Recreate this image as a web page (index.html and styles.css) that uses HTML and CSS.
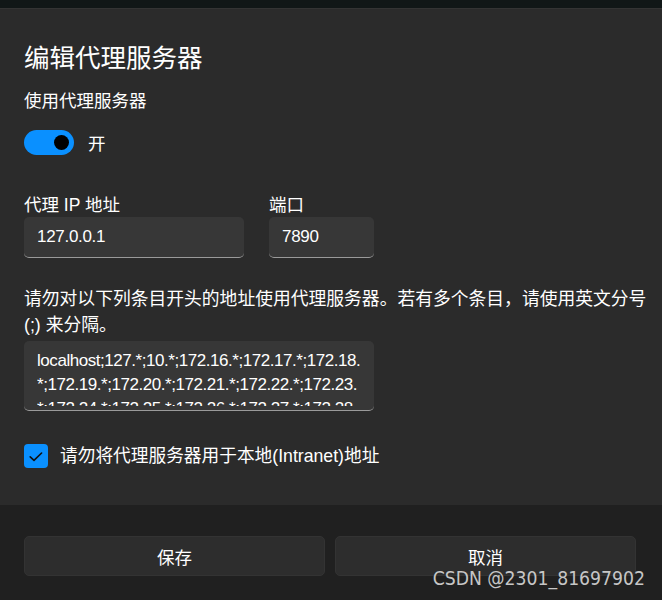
FILE: index.html
```html
<!DOCTYPE html>
<html lang="zh-CN">
<head>
<meta charset="utf-8">
<title>编辑代理服务器</title>
<link rel="stylesheet" href="styles.css">
</head>
<body>
<div class="dialog">
  <div class="content">
    <h1 class="title">编辑代理服务器</h1>
    <div class="subtitle">使用代理服务器</div>
    <div class="toggle-row">
      <div class="toggle"><span class="knob"></span></div>
      <span class="toggle-label">开</span>
    </div>
    <div class="fields">
      <div class="field field-ip">
        <div class="label">代理 IP 地址</div>
        <div class="input">127.0.0.1</div>
      </div>
      <div class="field field-port">
        <div class="label">端口</div>
        <div class="input">7890</div>
      </div>
    </div>
    <p class="desc">请勿对以下列条目开头的地址使用代理服务器。若有多个条目，请使用英文分号<br>(;) 来分隔。</p>
    <div class="textarea">
      <div class="textarea-view">localhost;127.*;10.*;172.16.*;172.17.*;172.18.<br>*;172.19.*;172.20.*;172.21.*;172.22.*;172.23.<br>*;172.24.*;172.25.*;172.26.*;172.27.*;172.28.</div>
    </div>
    <div class="check-row">
      <div class="checkbox">
        <svg width="24" height="24" viewBox="0 0 24 24"><polyline points="6.2,12.8 10,16.4 17.6,9" fill="none" stroke="#111" stroke-width="1.6" stroke-linecap="round" stroke-linejoin="round"/></svg>
      </div>
      <span class="check-label">请勿将代理服务器用于本地(Intranet)地址</span>
    </div>
  </div>
  <div class="footer">
    <button class="btn">保存</button>
    <button class="btn">取消</button>
  </div>
</div>
<div class="watermark">CSDN @2301_81697902</div>
</body>
</html>
```

FILE: styles.css
```css
* { box-sizing: border-box; }
html, body {
  margin: 0;
  padding: 0;
  background: #111717;
  height: 600px;
  overflow: hidden;
}
body {
  font-family: "Liberation Sans", "Noto Sans CJK SC", sans-serif;
  color: #ffffff;
  position: relative;
}
.dialog {
  margin-top: 8px;
  background: #2b2b2b;
  border-top: 1px solid #343434;
  height: 592px;
  display: flex;
  flex-direction: column;
}
.content {
  padding: 31px 24px 0 24px;
  height: 496px;
}
.title {
  margin: 0;
  font-size: 25.5px;
  font-weight: 400;
  line-height: 36px;
}
.subtitle {
  margin-top: 13px;
  font-size: 17.5px;
  line-height: 24px;
}
.toggle-row {
  margin-top: 17px;
  display: flex;
  align-items: center;
  gap: 14px;
}
.toggle {
  width: 50px;
  height: 25px;
  border-radius: 12.5px;
  background: #0a90ff;
  display: flex;
  align-items: center;
  justify-content: flex-end;
  padding-right: 5.5px;
}
.knob {
  width: 15px;
  height: 15px;
  border-radius: 50%;
  background: #000;
}
.toggle-label {
  font-size: 17.5px;
}
.fields {
  margin-top: 38px;
  display: flex;
  gap: 25px;
}
.field-ip { width: 220px; }
.field-port { width: 105px; }
.label {
  font-size: 17.5px;
  line-height: 24px;
}
.input {
  height: 41px;
  background: #373737;
  border-radius: 5px;
  border-bottom: 1.5px solid #9a9a9a;
  padding: 0 13px;
  font-size: 17px;
  letter-spacing: -0.3px;
  line-height: 39px;
}
.desc {
  margin: 28px 0 0 0;
  font-size: 17.8px;
  line-height: 26px;
  white-space: nowrap;
}
.textarea {
  margin-top: 3px;
  width: 350px;
  height: 70px;
  background: #373737;
  border-radius: 5px;
  border-bottom: 1.5px solid #9a9a9a;
  padding: 8px 13px 0 13px;
}
.textarea-view {
  height: 57px;
  overflow: hidden;
  font-size: 17px;
  letter-spacing: -0.45px;
  line-height: 24px;
  white-space: nowrap;
}
.check-row {
  margin-top: 33px;
  display: flex;
  align-items: center;
  gap: 12px;
}
.checkbox {
  width: 24px;
  height: 24px;
  border-radius: 4px;
  background: #0a90ff;
}
.checkbox svg { display: block; }
.check-label {
  font-size: 17.7px;
  line-height: 24px;
}
.footer {
  flex: 1;
  background: #202020;
  padding: 31px 26px 0 24px;
  display: grid;
  grid-template-columns: 1fr 1fr;
  column-gap: 10px;
  align-content: start;
}
.btn {
  height: 40px;
  background: #2d2d2d;
  border: 1px solid #333333;
  border-radius: 5px;
  color: #ffffff;
  font-family: "Noto Sans CJK SC", sans-serif;
  font-size: 17.5px;
}
.watermark {
  position: absolute;
  right: 17px;
  top: 567px;
  font-family: "DejaVu Sans Condensed", "DejaVu Sans", sans-serif;
  font-stretch: condensed;
  font-size: 19.2px;
  color: #c6c6c6;
  line-height: 24px;
}
```
